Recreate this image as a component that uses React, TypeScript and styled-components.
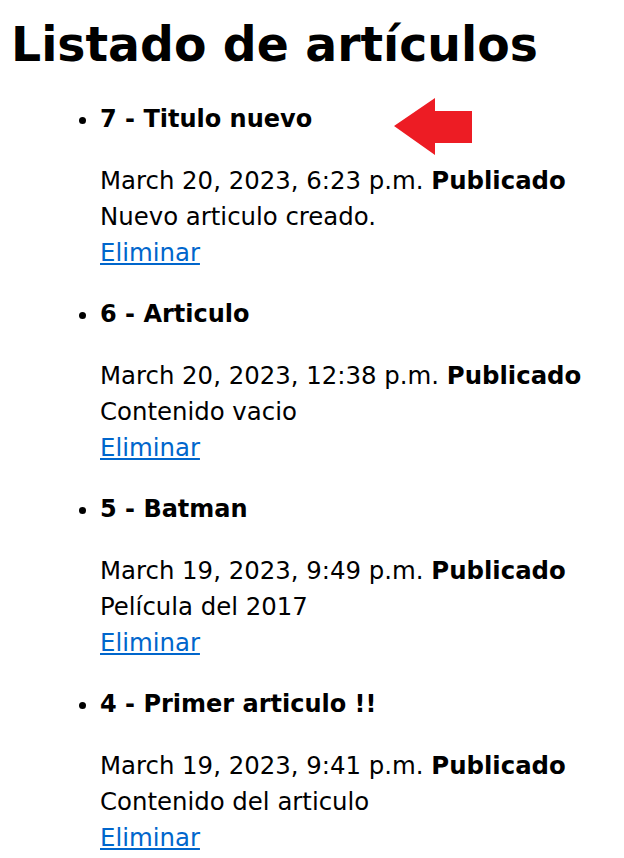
import React from "react";
import styled, { createGlobalStyle } from "styled-components";

const Global = createGlobalStyle`
  html, body { margin: 0; padding: 0; background: #ffffff; }
  body { font-family: "DejaVu Sans", Verdana, sans-serif; color: #000; }
`;

const Page = styled.div`
  position: relative;
  padding: 13px 12px 0 11px;
`;

const Title = styled.h1`
  margin: 0 0 14px 0;
  font-size: 47.3px;
  font-weight: bold;
  line-height: 64px;
`;

const List = styled.ul`
  margin: 0;
  padding: 0 0 0 89px;
  list-style: disc;
`;

const Item = styled.li`
  font-size: 24px;
  line-height: 36px;
  padding-top: 10px;
  padding-bottom: 15px;
`;

const Heading = styled.h3`
  margin: 0 0 26px 0;
  font-size: 24px;
  font-weight: bold;
  line-height: 36px;
`;

const Line = styled.div`
  font-size: 24.4px;
  line-height: 36px;
`;

const Status = styled.strong`
  font-weight: bold;
`;

const Link = styled.a`
  color: #0066cc;
  text-decoration: underline;
`;

const Arrow = styled.svg`
  position: absolute;
  left: 394px;
  top: 97px;
`;

const articles = [
  { id: 7, title: "Titulo nuevo", date: "March 20, 2023, 6:23 p.m.", body: "Nuevo articulo creado." },
  { id: 6, title: "Articulo", date: "March 20, 2023, 12:38 p.m.", body: "Contenido vacio" },
  { id: 5, title: "Batman", date: "March 19, 2023, 9:49 p.m.", body: "Película del 2017" },
  { id: 4, title: "Primer articulo !!", date: "March 19, 2023, 9:41 p.m.", body: "Contenido del articulo" },
];

export default function App() {
  return (
    <>
      <Global />
      <Page>
        <Title>Listado de artículos</Title>
        <List>
          {articles.map((a) => (
            <Item key={a.id}>
              <Heading>{a.id} - {a.title}</Heading>
              <Line>
                {a.date} <Status>Publicado</Status>
              </Line>
              <Line>{a.body}</Line>
              <Line>
                <Link href="#">Eliminar</Link>
              </Line>
            </Item>
          ))}
        </List>
        <Arrow width="80" height="60" viewBox="0 0 80 60">
          <polygon points="0,29 41,1 41,14 78,14 78,46 41,46 41,58" fill="#ED1C24" />
        </Arrow>
      </Page>
    </>
  );
}
